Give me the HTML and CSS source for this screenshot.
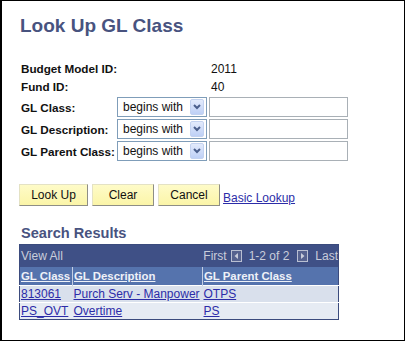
FILE: index.html
```html
<!DOCTYPE html>
<html>
<head>
    <title>Look Up GL Class</title>
    <link rel="stylesheet" href="styles.css">
</head>
<body>
    <div class="frame">
        <h1 class="page-title">Look Up GL Class</h1>

        <div class="criteria">
            <div class="info-row">
                <span class="info-label">Budget Model ID:</span>
                <span class="info-value">2011</span>
            </div>
            <div class="info-row">
                <span class="info-label">Fund ID:</span>
                <span class="info-value">40</span>
            </div>
            <div class="search-row">
                <span class="search-label">GL Class:</span>
                <div class="combo">
                    <span class="combo-text">begins with</span>
                    <span class="combo-btn"><svg width="8" height="6" viewBox="0 0 8 6"><path d="M1 1 L4 4 L7 1" fill="none" stroke="#4b5f8c" stroke-width="2"/></svg></span>
                </div>
                <input class="field" type="text">
            </div>
            <div class="search-row">
                <span class="search-label">GL Description:</span>
                <div class="combo">
                    <span class="combo-text">begins with</span>
                    <span class="combo-btn"><svg width="8" height="6" viewBox="0 0 8 6"><path d="M1 1 L4 4 L7 1" fill="none" stroke="#4b5f8c" stroke-width="2"/></svg></span>
                </div>
                <input class="field" type="text">
            </div>
            <div class="search-row">
                <span class="search-label">GL Parent Class:</span>
                <div class="combo">
                    <span class="combo-text">begins with</span>
                    <span class="combo-btn"><svg width="8" height="6" viewBox="0 0 8 6"><path d="M1 1 L4 4 L7 1" fill="none" stroke="#4b5f8c" stroke-width="2"/></svg></span>
                </div>
                <input class="field" type="text">
            </div>
        </div>

        <div class="actions">
            <button class="ps-button btn-lookup">Look Up</button>
            <button class="ps-button btn-small">Clear</button>
            <button class="ps-button btn-small">Cancel</button>
            <a class="basic-link" href="#">Basic Lookup</a>
        </div>

        <h2 class="section-title">Search Results</h2>

        <table class="grid">
            <colgroup>
                <col class="col-class">
                <col class="col-desc">
                <col class="col-parent">
            </colgroup>
            <tr class="nav-row">
                <td colspan="3">
                    <div class="nav-bar">
                        <span class="nav-text">View All</span>
                        <span class="pager">
                            <span class="nav-text">First</span>
                            <span class="pager-btn first-btn"><svg width="11" height="12" viewBox="0 0 11 12"><rect x="0.5" y="0.5" width="10" height="11" fill="#56628f" stroke="#b9bfd2"/><path d="M7 3 L3.5 6 L7 9 Z" fill="#c9cddb"/></svg></span>
                            <span class="nav-text">1-2 of 2</span>
                            <span class="pager-btn next-btn"><svg width="11" height="12" viewBox="0 0 11 12"><rect x="0.5" y="0.5" width="10" height="11" fill="#56628f" stroke="#b9bfd2"/><path d="M4 3 L7.5 6 L4 9 Z" fill="#c9cddb"/></svg></span>
                            <span class="nav-text">Last</span>
                        </span>
                    </div>
                </td>
            </tr>
            <tr class="head-row">
                <th><a href="#">GL Class</a></th>
                <th><a href="#">GL Description</a></th>
                <th><a href="#">GL Parent Class</a></th>
            </tr>
            <tr class="data-row odd">
                <td><a href="#">813061</a></td>
                <td><a href="#">Purch Serv - Manpower</a></td>
                <td><a href="#">OTPS</a></td>
            </tr>
            <tr class="data-row even">
                <td><a href="#">PS_OVT</a></td>
                <td><a href="#">Overtime</a></td>
                <td><a href="#">PS</a></td>
            </tr>
        </table>
    </div>
</body>
</html>
```

FILE: styles.css
```css
body {
    margin: 0;
    padding: 0;
    background-color: #fff;
    font-family: "Liberation Sans", Arial, sans-serif;
}

.frame {
    box-sizing: border-box;
    width: 405px;
    height: 341px;
    border: 1px solid #000;
    border-left-width: 2px;
    padding: 14px 0 0 17px;
}

.page-title {
    margin: 0 0 0 1px;
    font-size: 19px;
    line-height: 22px;
    font-weight: bold;
    color: #48537f;
}

.criteria {
    margin-top: 23px;
}

.info-row {
    display: flex;
    height: 18px;
    line-height: 18px;
    font-size: 12px;
}

.info-label {
    width: 190px;
    padding-left: 2px;
    font-size: 11.7px;
    font-weight: bold;
    color: #111;
}

.info-value {
    color: #111;
}

.search-row {
    display: flex;
    align-items: center;
    height: 22px;
}

.search-label {
    width: 96px;
    padding-left: 2px;
    font-size: 11.7px;
    font-weight: bold;
    color: #111;
}

.combo {
    box-sizing: border-box;
    display: flex;
    align-items: center;
    justify-content: space-between;
    width: 90px;
    height: 20px;
    border: 1px solid #7f9db9;
    padding: 0 2px 0 5px;
    background-color: #fff;
    font-size: 12px;
    color: #111;
}

.combo-btn {
    box-sizing: border-box;
    display: flex;
    align-items: center;
    justify-content: center;
    width: 14px;
    height: 16px;
    border: 1px solid #c3d2f0;
    border-radius: 2px;
    background: linear-gradient(#e3ebfc, #bed0f6);
}

.field {
    box-sizing: border-box;
    width: 139px;
    height: 20px;
    margin: 0 0 0 2px;
    border: 1px solid #a9b0b6;
    padding: 0 3px;
    font-family: inherit;
    font-size: 12px;
}

.actions {
    display: flex;
    align-items: flex-start;
    gap: 4px;
    margin-top: 22px;
    height: 22px;
}

.ps-button {
    box-sizing: border-box;
    height: 22px;
    margin: 0;
    padding: 0;
    border: 1px solid;
    border-color: #e4e2c4 #8e8e86 #8e8e86 #e4e2c4;
    background: linear-gradient(#fefbc8, #fbf5a8);
    font-family: inherit;
    font-size: 12px;
    color: #111;
}

.btn-lookup {
    width: 69px;
}

.btn-small {
    width: 62px;
}

.basic-link {
    margin-top: 6px;
    margin-left: -1px;
    font-size: 12px;
    line-height: 16px;
    color: #2c2ca8;
}

.section-title {
    margin: 19px 0 0 2px;
    font-size: 14.6px;
    line-height: 17px;
    font-weight: bold;
    color: #48537f;
}

.grid {
    margin-top: 2px;
    width: 319px;
    border-collapse: collapse;
    table-layout: fixed;
    border: 1px solid #3b4b7d;
    font-size: 12px;
}

.col-class {
    width: 53px;
}

.col-desc {
    width: 130px;
}

.col-parent {
    width: 136px;
}

.grid td, .grid th {
    padding: 0 0 0 1px;
    white-space: nowrap;
    overflow: hidden;
    text-align: left;
}

.nav-row td {
    height: 22px;
    background-color: #3f5086;
}

.nav-bar {
    display: flex;
    justify-content: space-between;
    align-items: center;
}

.nav-text {
    color: #c9cddb;
    font-size: 12px;
}

.pager {
    display: flex;
    align-items: center;
    margin-right: 0;
}

.pager-btn {
    display: flex;
    margin: 0 7px;
}

.first-btn {
    margin-left: 4px;
}

.next-btn {
    margin-left: 8px;
}

.head-row th {
    height: 18px;
    background-color: #5573ad;
    border-left: 1px solid #c4cfe4;
    font-size: 11.4px;
    font-weight: bold;
}

.head-row th:first-child {
    border-left: none;
}

.head-row a {
    color: #eef1f8;
}

.data-row td {
    height: 16px;
    border-top: 1px solid #fff;
}

.data-row a {
    color: #2c2ca8;
}

.odd td {
    background-color: #d9e0ec;
}

.even td {
    background-color: #e6ebf3;
}
```
